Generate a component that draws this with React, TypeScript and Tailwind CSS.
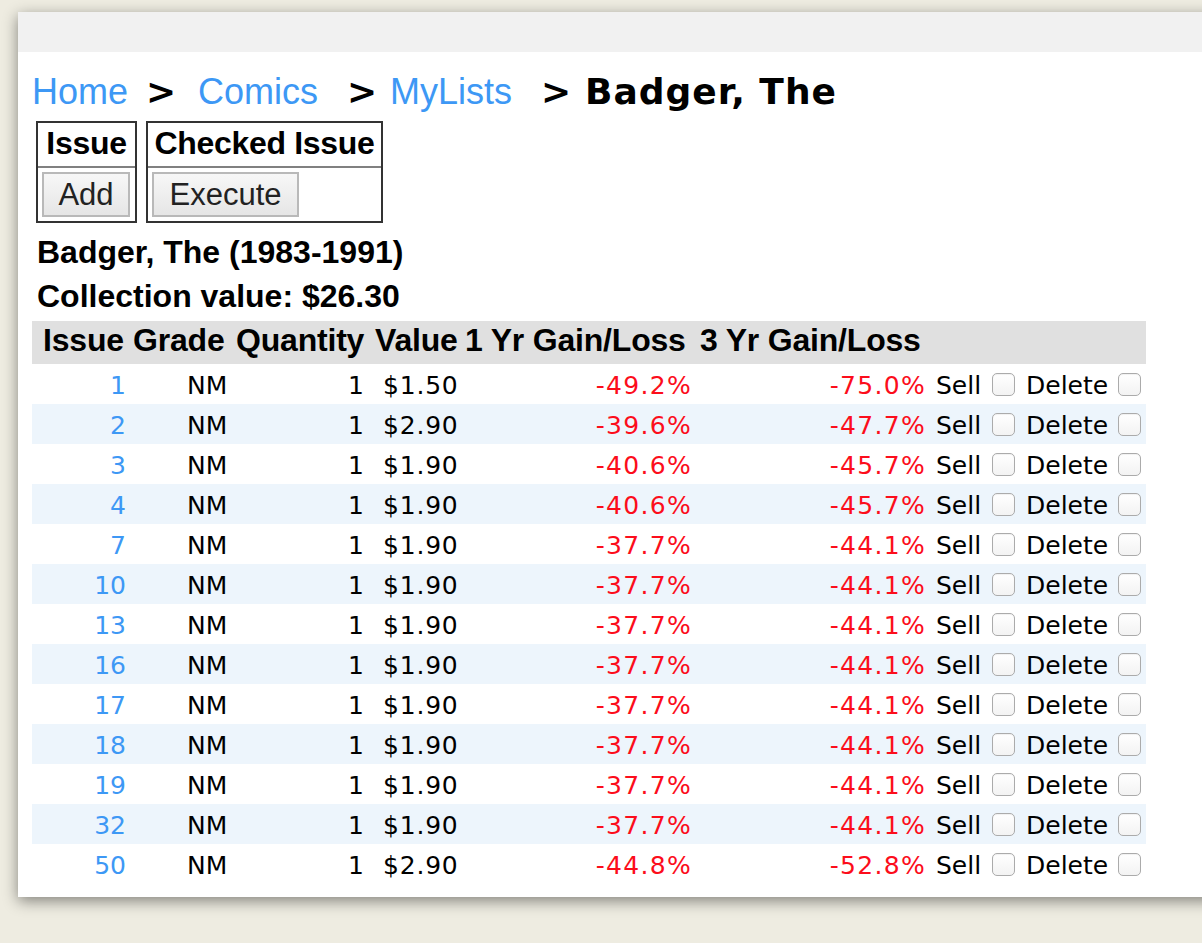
import React from "react";

type Row = { issue: string; value: string; y1: string; y3: string };

const rows: Row[] = [
  { issue: "1", value: "$1.50", y1: "-49.2%", y3: "-75.0%" },
  { issue: "2", value: "$2.90", y1: "-39.6%", y3: "-47.7%" },
  { issue: "3", value: "$1.90", y1: "-40.6%", y3: "-45.7%" },
  { issue: "4", value: "$1.90", y1: "-40.6%", y3: "-45.7%" },
  { issue: "7", value: "$1.90", y1: "-37.7%", y3: "-44.1%" },
  { issue: "10", value: "$1.90", y1: "-37.7%", y3: "-44.1%" },
  { issue: "13", value: "$1.90", y1: "-37.7%", y3: "-44.1%" },
  { issue: "16", value: "$1.90", y1: "-37.7%", y3: "-44.1%" },
  { issue: "17", value: "$1.90", y1: "-37.7%", y3: "-44.1%" },
  { issue: "18", value: "$1.90", y1: "-37.7%", y3: "-44.1%" },
  { issue: "19", value: "$1.90", y1: "-37.7%", y3: "-44.1%" },
  { issue: "32", value: "$1.90", y1: "-37.7%", y3: "-44.1%" },
  { issue: "50", value: "$2.90", y1: "-44.8%", y3: "-52.8%" },
];

const grid =
  "grid grid-cols-[99px_102px_137px_92px_232px_234px_92px_126px]";

function Check() {
  return (
    <span className="inline-block w-[23px] h-[23px] rounded-[5px] border border-[#ababab] bg-gradient-to-b from-white to-[#f3f3f3] shadow-[inset_0_1px_1px_rgba(0,0,0,0.06)]" />
  );
}

function ActionBox({
  title,
  label,
  width,
  btnWidth,
}: {
  title: string;
  label: string;
  width: string;
  btnWidth: string;
}) {
  return (
    <div className={`${width} border-2 border-[#333333] flex flex-col`}>
      <div className="h-[43px] pt-[2px] text-center font-bold text-[32px] leading-[36px] text-black font-['Liberation_Sans',Arial,sans-serif] tracking-[-0.3px]">
        {title}
      </div>
      <div className="h-[2px] bg-[#808080]" />
      <div className="h-[53px] pt-[4px] pl-[4px]">
        <button
          className={`${btnWidth} h-[45px] border-2 border-[#b9b9b9] bg-gradient-to-b from-[#f7f7f7] to-[#e6e6e6] text-[#222] text-[31px] leading-[40px] font-['Liberation_Sans',Arial,sans-serif] text-center`}
        >
          {label}
        </button>
      </div>
    </div>
  );
}

export default function App() {
  return (
    <div className="w-[1202px] h-[943px] overflow-hidden bg-[#eeece1] pt-[12px] pl-[18px]">
      <div className="w-[1300px] h-[885px] bg-white shadow-[0_4px_14px_rgba(0,0,0,0.45)]">
        <div className="h-[40px] bg-[#f1f1f1]" />

        {/* breadcrumb */}
        <div className="mt-[19px] h-[41px] flex items-baseline leading-[41px] whitespace-nowrap">
          <span className="w-[128px] pl-[14px] text-[36px] text-[#3d98f5] font-['Liberation_Sans',Arial,sans-serif]">
            Home
          </span>
          <span className="w-[52px] text-[36px] font-bold text-black font-['DejaVu_Sans',Verdana,sans-serif]">
            &gt;
          </span>
          <span className="w-[149px] text-[36px] text-[#3d98f5] font-['Liberation_Sans',Arial,sans-serif]">
            Comics
          </span>
          <span className="w-[43px] text-[36px] font-bold text-black font-['DejaVu_Sans',Verdana,sans-serif]">
            &gt;
          </span>
          <span className="w-[151px] text-[36px] text-[#3d98f5] font-['Liberation_Sans',Arial,sans-serif]">
            MyLists
          </span>
          <span className="w-[44px] text-[36px] font-bold text-black font-['DejaVu_Sans',Verdana,sans-serif]">
            &gt;
          </span>
          <span className="text-[36px] font-bold text-black font-['DejaVu_Sans',Verdana,sans-serif] tracking-[1px]">
            Badger, The
          </span>
        </div>

        {/* action boxes */}
        <div className="mt-[9px] ml-[18px] flex gap-[9px]">
          <ActionBox title="Issue" label="Add" width="w-[101px]" btnWidth="w-[88px]" />
          <ActionBox
            title="Checked Issue"
            label="Execute"
            width="w-[237px]"
            btnWidth="w-[147px]"
          />
        </div>

        {/* titles */}
        <div className="mt-[11px] ml-[19px] text-[32px] leading-[36px] font-bold text-black font-['Liberation_Sans',Arial,sans-serif]">
          Badger, The (1983-1991)
        </div>
        <div className="mt-[8px] ml-[19px] text-[32px] leading-[36px] font-bold text-black font-['Liberation_Sans',Arial,sans-serif]">
          Collection value: $26.30
        </div>

        {/* table */}
        <div className="mt-[7px] ml-[14px] w-[1114px]">
          <div
            className={`${grid} h-[43px] bg-[#e0e0e0] text-[32px] leading-[38px] font-bold text-black font-['Liberation_Sans',Arial,sans-serif] whitespace-nowrap tracking-[-0.2px]`}
          >
            <div className="pl-[11px]">Issue</div>
            <div className="pl-[2px]">Grade</div>
            <div className="pl-[3px]">Quantity</div>
            <div className="pl-[5px]">Value</div>
            <div className="pl-[3px]">1 Yr Gain/Loss</div>
            <div className="pl-[6px]">3 Yr Gain/Loss</div>
            <div />
            <div />
          </div>
          {rows.map((r, i) => (
            <div
              key={r.issue}
              className={`${grid} h-[40px] ${
                i % 2 === 1 ? "bg-[#edf5fc]" : "bg-white"
              } text-[25px] font-['DejaVu_Sans',Verdana,sans-serif] whitespace-nowrap`}
            >
              <div className="text-right pr-[5px] pt-[4px] leading-[36px] text-[#3d98f5]">
                {r.issue}
              </div>
              <div className="pl-[56px] pt-[4px] leading-[36px] text-black">NM</div>
              <div className="text-right pr-[6px] pt-[4px] leading-[36px] text-black">1</div>
              <div className="pl-[13px] pt-[4px] leading-[36px] text-black tracking-[0.8px]">
                {r.value}
              </div>
              <div className="text-right pr-[2px] pt-[4px] leading-[36px] text-[#fc0d1b] tracking-[1.3px]">
                {r.y1}
              </div>
              <div className="text-right pr-[2px] pt-[4px] leading-[36px] text-[#fc0d1b] tracking-[1.3px]">
                {r.y3}
              </div>
              <div className="flex items-center pl-[8px] text-black">
                <span className="w-[56px] pt-[4px] leading-[36px]">Sell</span>
                <Check />
              </div>
              <div className="flex items-center pl-[6px] text-black">
                <span className="w-[92px] pt-[4px] leading-[36px]">Delete</span>
                <Check />
              </div>
            </div>
          ))}
        </div>
      </div>
    </div>
  );
}
